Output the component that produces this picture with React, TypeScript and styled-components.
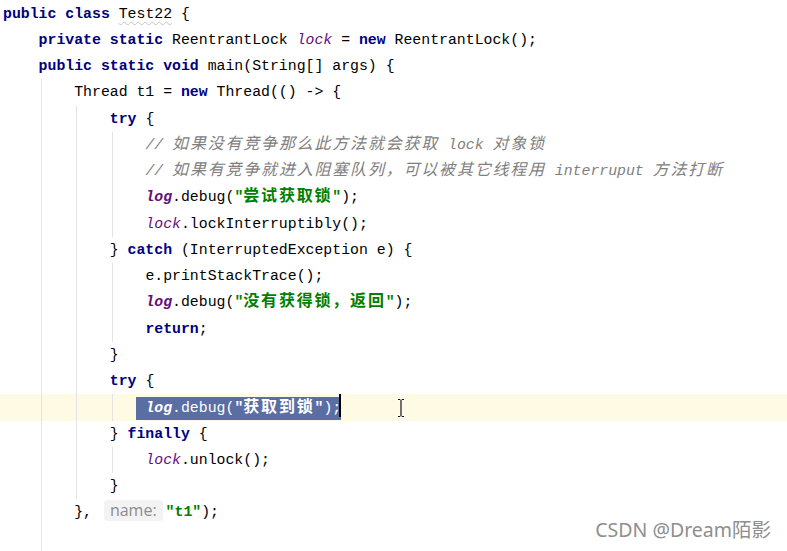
import React from "react";
import styled, { createGlobalStyle } from "styled-components";

const CH = 8.9;
const LH = 26.26;

const Global = createGlobalStyle`
  html, body { margin: 0; padding: 0; background: #fff; }
  body { font-family: "Liberation Mono", "DejaVu Sans Mono", monospace; }
`;

const Editor = styled.div`
  position: relative;
  width: 787px;
  height: 551px;
  overflow: hidden;
  background: #ffffff;
  padding: 0.6px 0 0 3px;
  box-sizing: border-box;
  font-family: "Liberation Mono", "DejaVu Sans Mono", monospace;
  font-size: 14.83px;
  color: #000;
`;

const Line = styled.div<{ $current?: boolean }>`
  display: flex;
  height: ${LH}px;
  line-height: ${LH}px;
  white-space: pre;
  margin-left: -3px;
  padding-left: 3px;
  background: ${(p) => (p.$current ? "#fffae3" : "transparent")};
`;

const Indent = styled.span<{ $cols: number; $guide: boolean }>`
  flex: none;
  width: ${(p) => p.$cols * CH}px;
  height: 100%;
  background: ${(p) =>
    p.$guide ? "linear-gradient(#e3e3e3, #e3e3e3) no-repeat 2px 0 / 1px 100%" : "none"};
`;

const Code = styled.span`
  flex: none;
  white-space: pre;
`;

const Kw = styled.span`
  color: #000080;
  font-weight: bold;
`;

const Cm = styled.span`
  color: #808080;
  font-style: italic;
`;

const Str = styled.span`
  color: #008000;
  font-weight: bold;
`;

const Fld = styled.span<{ $bold?: boolean }>`
  color: #660e7a;
  font-style: italic;
  font-weight: ${(p) => (p.$bold ? "bold" : "normal")};
`;

const Han = styled.span`
  font-family: "Noto Sans CJK SC", sans-serif;
  font-size: 16px;
  letter-spacing: 1.8px;
  line-height: 1;
`;

const Squiggle = styled.span`
  text-decoration: underline wavy #c4c4c4;
  text-decoration-thickness: 1px;
  text-underline-offset: 3px;
`;

const Sel = styled.span`
  display: inline-block;
  height: 23px;
  line-height: 23px;
  background: #5a6ea3;
  color: #fff;
  & * {
    color: #fff;
  }
`;

const Caret = styled.span`
  display: inline-block;
  width: 2px;
  height: 23px;
  margin-left: -2px;
  background: #000;
  vertical-align: -5px;
`;

const Hint = styled.span`
  display: inline-block;
  height: 21px;
  line-height: 21px;
  padding: 0 6px;
  margin: 0 3px 0 3px;
  border-radius: 3px;
  background: #f3f3f3;
  color: #8c8c8c;
  font-family: "Open Sans", "Noto Sans", sans-serif;
  font-size: 16px;
`;

const Mouse = styled.svg`
  position: absolute;
  left: 396px;
  top: 398px;
`;

const Watermark = styled.div`
  position: absolute;
  right: 16px;
  bottom: 8px;
  font-family: "Noto Sans", "Noto Sans CJK SC", sans-serif;
  font-size: 19.5px;
  color: #8e8e8e;
  text-shadow: 1px 1px 1px rgba(255, 255, 255, 0.9);
  white-space: nowrap;
`;

function Indents({ n, g, last = 4 }: { n: number; g: number; last?: number }) {
  return (
    <>
      {Array.from({ length: n }, (_, k) => (
        <Indent key={k} $cols={k === n - 1 ? last : 4} $guide={k >= 1 && k <= g} />
      ))}
    </>
  );
}

export default function App() {
  return (
    <>
      <Global />
      <Editor>
        <Line>
          <Code>
            <Kw>public class</Kw> <Squiggle>Test22</Squiggle> {"{"}
          </Code>
        </Line>
        <Line>
          <Indents n={1} g={0} />
          <Code>
            <Kw>private static</Kw> ReentrantLock <Fld>lock</Fld> = <Kw>new</Kw> ReentrantLock();
          </Code>
        </Line>
        <Line>
          <Indents n={1} g={0} />
          <Code>
            <Kw>public static void</Kw> main(String[] args) {"{"}
          </Code>
        </Line>
        <Line>
          <Indents n={2} g={1} />
          <Code>
            Thread t1 = <Kw>new</Kw> Thread(() -&gt; {"{"}
          </Code>
        </Line>
        <Line>
          <Indents n={3} g={2} />
          <Code>
            <Kw>try</Kw> {"{"}
          </Code>
        </Line>
        <Line>
          <Indents n={4} g={3} />
          <Code>
            <Cm>
              // <Han>如果没有竞争那么此方法就会获取</Han> lock <Han>对象锁</Han>
            </Cm>
          </Code>
        </Line>
        <Line>
          <Indents n={4} g={3} />
          <Code>
            <Cm>
              // <Han>如果有竞争就进入阻塞队列，可以被其它线程用</Han> interruput <Han>方法打断</Han>
            </Cm>
          </Code>
        </Line>
        <Line>
          <Indents n={4} g={3} />
          <Code>
            <Fld $bold>log</Fld>.debug(
            <Str>
              "<Han>尝试获取锁</Han>"
            </Str>
            );
          </Code>
        </Line>
        <Line>
          <Indents n={4} g={3} />
          <Code>
            <Fld>lock</Fld>.lockInterruptibly();
          </Code>
        </Line>
        <Line>
          <Indents n={3} g={2} />
          <Code>
            {"} "}
            <Kw>catch</Kw> (InterruptedException e) {"{"}
          </Code>
        </Line>
        <Line>
          <Indents n={4} g={3} />
          <Code>e.printStackTrace();</Code>
        </Line>
        <Line>
          <Indents n={4} g={3} />
          <Code>
            <Fld $bold>log</Fld>.debug(
            <Str>
              "<Han>没有获得锁，返回</Han>"
            </Str>
            );
          </Code>
        </Line>
        <Line>
          <Indents n={4} g={3} />
          <Code>
            <Kw>return</Kw>;
          </Code>
        </Line>
        <Line>
          <Indents n={3} g={2} />
          <Code>{"}"}</Code>
        </Line>
        <Line>
          <Indents n={3} g={2} />
          <Code>
            <Kw>try</Kw> {"{"}
          </Code>
        </Line>
        <Line $current>
          <Indents n={4} g={3} last={3} />
          <Code>
            <Sel>
              {" "}
              <Fld $bold>log</Fld>.debug(
              <Str>
                "<Han>获取到锁</Han>"
              </Str>
              );
            </Sel>
            <Caret />
          </Code>
        </Line>
        <Line>
          <Indents n={3} g={2} />
          <Code>
            {"} "}
            <Kw>finally</Kw> {"{"}
          </Code>
        </Line>
        <Line>
          <Indents n={4} g={3} />
          <Code>
            <Fld>lock</Fld>.unlock();
          </Code>
        </Line>
        <Line>
          <Indents n={3} g={2} />
          <Code>{"}"}</Code>
        </Line>
        <Line>
          <Indents n={2} g={1} />
          <Code>
            {"}, "}
            <Hint>name:</Hint>
            <Str>"t1"</Str>);
          </Code>
        </Line>
        <Line>
          <Indents n={2} g={1} />
        </Line>
        <Mouse width="10" height="20" viewBox="0 0 10 20">
          <path d="M1.5 1.5h7M5 1.5v17M1.5 18.5h7" stroke="#fff" strokeWidth="2.6" fill="none" />
          <path d="M2 1.5h2.3M5.7 1.5H8M5 2v16M2 18.5h2.3M5.7 18.5H8" stroke="#111" strokeWidth="1.2" fill="none" />
        </Mouse>
        <Watermark>CSDN @Dream陌影</Watermark>
      </Editor>
    </>
  );
}
